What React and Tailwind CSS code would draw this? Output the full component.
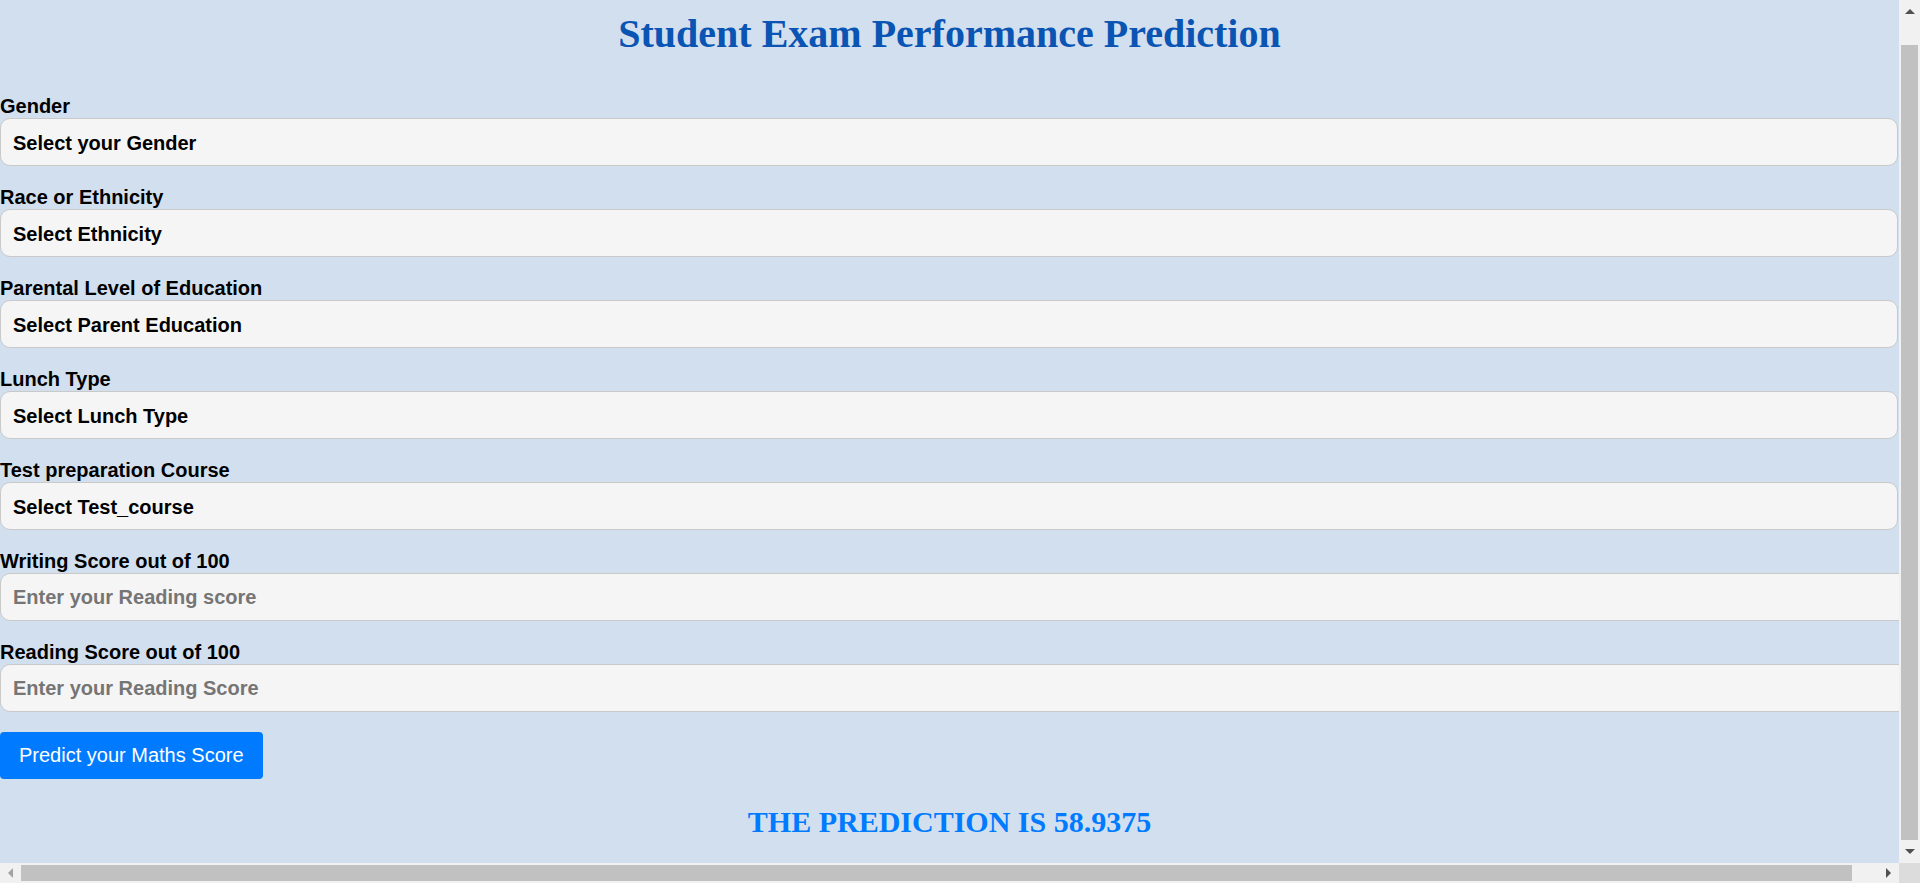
import { useState } from "react";

const selectFields = [
  { label: "Gender", name: "gender", placeholder: "Select your Gender" },
  { label: "Race or Ethnicity", name: "ethnicity", placeholder: "Select Ethnicity" },
  { label: "Parental Level of Education", name: "parental_level_of_education", placeholder: "Select Parent Education" },
  { label: "Lunch Type", name: "lunch", placeholder: "Select Lunch Type" },
  { label: "Test preparation Course", name: "test_preparation_course", placeholder: "Select Test_course" },
];

const scoreFields = [
  { label: "Writing Score out of 100", name: "writing_score", placeholder: "Enter your Reading score" },
  { label: "Reading Score out of 100", name: "reading_score", placeholder: "Enter your Reading Score" },
];

export default function App() {
  const [values, setValues] = useState({});

  const update = (name) => (e) => setValues((prev) => ({ ...prev, [name]: e.target.value }));

  return (
    <div className="flex h-[883px] w-[1920px] flex-col overflow-hidden bg-[#d2dfee] font-['Liberation_Sans',Arial,sans-serif]">
      <div className="flex min-h-0 flex-1">
        {/* page content */}
        <div className="min-w-0 flex-1 overflow-hidden">
          <h1 className="mt-[11px] mb-[38px] text-center font-['Liberation_Serif','Times_New_Roman',serif] text-[40px] font-bold leading-[46px] text-[#0a54b3]">
            Student Exam Performance Prediction
          </h1>

          <form onSubmit={(e) => e.preventDefault()}>
            {selectFields.map((f) => (
              <div key={f.name} className="mb-[20px]">
                <label className="block text-[20px] font-bold leading-[23px] text-black">{f.label}</label>
                <select
                  name={f.name}
                  value={values[f.name] || ""}
                  onChange={update(f.name)}
                  className="block h-[48px] w-[calc(100%-1px)] appearance-none rounded-[10px] border border-[#c9c9c9] bg-[#f5f5f5] px-[12px] pt-[1px] text-[20px] font-bold text-black outline-none"
                >
                  <option value="" disabled>
                    {f.placeholder}
                  </option>
                </select>
              </div>
            ))}

            {scoreFields.map((f) => (
              <div key={f.name} className="mb-[20px]">
                <label className="block text-[20px] font-bold leading-[23px] text-black">{f.label}</label>
                <input
                  type="number"
                  name={f.name}
                  placeholder={f.placeholder}
                  value={values[f.name] || ""}
                  onChange={update(f.name)}
                  className="block h-[48px] w-[calc(100%+26px)] rounded-[10px] border border-[#c9c9c9] bg-[#f5f5f5] px-[12px] pt-[1px] text-[20px] font-bold text-black outline-none placeholder:text-[#757575]"
                />
              </div>
            ))}

            <button
              type="submit"
              className="rounded-[4px] bg-[#007bff] px-[19px] py-[12px] text-[20px] leading-[23px] text-white"
            >
              Predict your Maths Score
            </button>
          </form>

          <h2 className="mt-[25px] text-center font-['Liberation_Serif','Times_New_Roman',serif] text-[30px] font-bold leading-[35px] text-[#007bff]">
            THE PREDICTION IS 58.9375
          </h2>
        </div>

        {/* vertical scrollbar */}
        <div className="flex w-[21px] flex-col bg-[#f1f1f1]">
          <div className="flex h-[45px] items-start justify-center pt-[9px]">
            <div className="h-0 w-0 border-x-[5px] border-b-[5px] border-x-transparent border-b-[#505050]" />
          </div>
          <div className="mx-[2px] flex-1 bg-[#c1c1c1]" />
          <div className="flex h-[23px] items-center justify-center">
            <div className="h-0 w-0 border-x-[5px] border-t-[5px] border-x-transparent border-t-[#505050]" />
          </div>
        </div>
      </div>

      {/* horizontal scrollbar */}
      <div className="flex h-[20px]">
        <div className="flex flex-1 items-center bg-[#f1f1f1]">
          <div className="flex w-[21px] items-center justify-center">
            <div className="h-0 w-0 border-y-[5px] border-r-[5px] border-y-transparent border-r-[#a3a3a3]" />
          </div>
          <div className="h-[16px] flex-1 bg-[#c1c1c1]" />
          <div className="flex w-[47px] items-center justify-center pl-[26px]">
            <div className="h-0 w-0 border-y-[5px] border-l-[5px] border-y-transparent border-l-[#505050]" />
          </div>
        </div>
        <div className="w-[21px] bg-[#dcdcdc]" />
      </div>
    </div>
  );
}
